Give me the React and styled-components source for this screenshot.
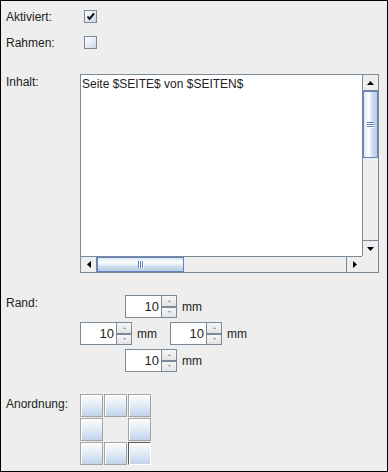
import styled, { createGlobalStyle } from 'styled-components';

const GlobalStyle = createGlobalStyle`
  html, body {
    margin: 0;
    padding: 0;
    background: #eeeeee;
  }
  * {
    box-sizing: border-box;
  }
`;

const Frame = styled.div`
  width: 388px;
  height: 472px;
  border: 1px solid #000;
  background: #eeeeee;
  padding: 9px 0 0 5px;
  display: flex;
  flex-direction: column;
  font-family: 'Liberation Sans', Arial, sans-serif;
  font-size: 12px;
  color: #222;
`;

const Row = styled.div`
  display: flex;
  align-items: flex-start;
  margin-top: ${(p) => p.$gap || 0}px;
`;

const Label = styled.div`
  width: 74px;
  flex-shrink: 0;
  line-height: 14px;
  margin-top: ${(p) => p.$offset || 0}px;
`;

const CheckBox = styled.div`
  width: 13px;
  height: 13px;
  margin-left: 4px;
  border: 1px solid #7a8a99;
  background: linear-gradient(135deg, #ffffff 0%, #e6edf5 50%, #c8d6e6 100%);
  display: flex;
  align-items: center;
  justify-content: center;
`;

const ScrollPane = styled.div`
  width: 299px;
  height: 199px;
  border: 1px solid #7a8a99;
  display: grid;
  grid-template-columns: 1fr 16px;
  grid-template-rows: 1fr 16px;
`;

const TextArea = styled.div`
  background: #fff;
  padding: 2px 1px;
  line-height: 14px;
  white-space: nowrap;
`;

const VScroll = styled.div`
  display: flex;
  flex-direction: column;
  background: #eeeeee;
  border-left: 1px solid #7a8a99;
`;

const HScroll = styled.div`
  display: flex;
  background: #eeeeee;
  border-top: 1px solid #7a8a99;
`;

const Corner = styled.div`
  background: #eeeeee;
`;

const ArrowButton = styled.div`
  width: ${(p) => (p.$horizontal ? '16px' : '100%')};
  height: ${(p) => (p.$horizontal ? '100%' : '16px')};
  flex-shrink: 0;
  background: #eeeeee;
  display: flex;
  align-items: center;
  justify-content: center;
  border-color: #7a8a99;
  border-style: solid;
  border-width: ${(p) =>
    ({ up: '0 0 1px 0', down: '1px 0 0 0', left: '0 1px 0 0', right: '0 0 0 1px' }[p.$dir])};
`;

const Track = styled.div`
  flex: 1;
  display: flex;
  flex-direction: ${(p) => (p.$horizontal ? 'row' : 'column')};
`;

const Thumb = styled.div`
  flex-shrink: 0;
  width: ${(p) => (p.$horizontal ? `${p.$size}px` : '100%')};
  height: ${(p) => (p.$horizontal ? '100%' : `${p.$size}px`)};
  border: 1px solid #6382bf;
  background: linear-gradient(
    ${(p) => (p.$horizontal ? 'to bottom' : 'to right')},
    #dce7f3 0%,
    #ffffff 35%,
    #c9daec 70%,
    #b8cfe5 100%
  );
  display: flex;
  flex-direction: ${(p) => (p.$horizontal ? 'row' : 'column')};
  align-items: center;
  justify-content: center;
  gap: 1px;
`;

const Grip = styled.span`
  display: block;
  background: #6382bf;
  width: ${(p) => (p.$horizontal ? '1px' : '7px')};
  height: ${(p) => (p.$horizontal ? '7px' : '1px')};
  box-shadow: ${(p) => (p.$horizontal ? '1px 0 0 #fff' : '0 1px 0 #fff')};
`;

const MarginBox = styled.div`
  width: 167px;
  display: flex;
  flex-direction: column;
  align-items: center;
  gap: 4px;
`;

const MarginRow = styled.div`
  display: flex;
  gap: 13px;
`;

const SpinGroup = styled.div`
  display: flex;
  align-items: center;
  gap: 5px;
`;

const Spinner = styled.div`
  width: 52px;
  height: 23px;
  border: 1px solid #7a8a99;
  display: flex;
  background: #fff;
`;

const SpinField = styled.div`
  flex: 1;
  text-align: right;
  padding-right: 2px;
  line-height: 22px;
  font-size: 13px;
`;

const SpinButtons = styled.div`
  width: 15px;
  display: flex;
  flex-direction: column;
  border-left: 1px solid #7a8a99;
`;

const SpinButton = styled.div`
  flex: 1;
  background: linear-gradient(to bottom, #f6f6f6, #e4e4e4);
  display: flex;
  align-items: center;
  justify-content: center;
  border-color: #7a8a99;
  border-style: solid;
  border-width: ${(p) => (p.$up ? '0 0 1px 0' : '1px 0 0 0')};
`;

const Unit = styled.span`
  font-size: 12px;
  line-height: 14px;
`;

const PosGrid = styled.div`
  display: grid;
  grid-template-columns: repeat(3, 23px);
  grid-template-rows: repeat(3, 23px);
  gap: 1px;
`;

const PosButton = styled.div`
  border: 1px solid #a3a3a3;
  border-top-color: ${(p) => (p.$selected ? '#5a5a5a' : '#a3a3a3')};
  border-left-color: ${(p) => (p.$selected ? '#5a5a5a' : '#a3a3a3')};
  border-right-color: ${(p) => (p.$selected ? '#ffffff' : '#a3a3a3')};
  border-bottom-color: ${(p) => (p.$selected ? '#ffffff' : '#a3a3a3')};
  box-shadow: inset 1px 1px 0 #ffffff;
  background: linear-gradient(to bottom, #fbfcfe 0%, #e4ecf6 45%, #c3d5eb 100%);
`;

const Empty = styled.div``;

const Triangle = ({ dir, size = 7, color = '#000' }) => {
  const h = Math.ceil(size / 2);
  const pts = {
    up: `0,${h} ${size},${h} ${size / 2},0`,
    down: `0,0 ${size},0 ${size / 2},${h}`,
    left: `${h},0 ${h},${size} 0,${size / 2}`,
    right: `0,0 0,${size} ${h},${size / 2}`,
  }[dir];
  const horiz = dir === 'left' || dir === 'right';
  return (
    <svg width={horiz ? h : size} height={horiz ? size : h} style={{ display: 'block' }}>
      <polygon points={pts} fill={color} />
    </svg>
  );
};

const CheckMark = () => (
  <svg width="9" height="9" viewBox="0 0 9 9" style={{ display: 'block' }}>
    <path d="M1.5 4.5 L3.5 7 L8 1.5" fill="none" stroke="#111" strokeWidth="2" />
  </svg>
);

const Spin = ({ value }) => (
  <SpinGroup>
    <Spinner>
      <SpinField>{value}</SpinField>
      <SpinButtons>
        <SpinButton $up>
          <Triangle dir="up" size={3} color="#8a9aaa" />
        </SpinButton>
        <SpinButton>
          <Triangle dir="down" size={3} color="#8a9aaa" />
        </SpinButton>
      </SpinButtons>
    </Spinner>
    <Unit>mm</Unit>
  </SpinGroup>
);

const positions = [true, true, true, true, false, true, true, true, 'sel'];

export default function App() {
  return (
    <>
      <GlobalStyle />
      <Frame>
        <Row>
          <Label>Aktiviert:</Label>
          <CheckBox>
            <CheckMark />
          </CheckBox>
        </Row>
        <Row $gap={12}>
          <Label>Rahmen:</Label>
          <CheckBox />
        </Row>
        <Row $gap={24}>
          <Label $offset={1}>Inhalt:</Label>
          <ScrollPane>
            <TextArea>Seite $SEITE$ von $SEITEN$</TextArea>
            <VScroll>
              <ArrowButton $dir="up">
                <Triangle dir="up" />
              </ArrowButton>
              <Track>
                <Thumb $size={67}>
                  <Grip />
                  <Grip />
                  <Grip />
                </Thumb>
              </Track>
              <ArrowButton $dir="down">
                <Triangle dir="down" />
              </ArrowButton>
            </VScroll>
            <HScroll>
              <ArrowButton $horizontal $dir="left">
                <Triangle dir="left" />
              </ArrowButton>
              <Track $horizontal>
                <Thumb $horizontal $size={87}>
                  <Grip $horizontal />
                  <Grip $horizontal />
                  <Grip $horizontal />
                </Thumb>
              </Track>
              <ArrowButton $horizontal $dir="right">
                <Triangle dir="right" />
              </ArrowButton>
            </HScroll>
            <Corner />
          </ScrollPane>
        </Row>
        <Row $gap={22}>
          <Label $offset={1}>Rand:</Label>
          <MarginBox>
            <Spin value="10" />
            <MarginRow>
              <Spin value="10" />
              <Spin value="10" />
            </MarginRow>
            <Spin value="10" />
          </MarginBox>
        </Row>
        <Row $gap={22}>
          <Label $offset={3}>Anordnung:</Label>
          <PosGrid>
            {positions.map((p, i) =>
              p ? <PosButton key={i} $selected={p === 'sel'} /> : <Empty key={i} />
            )}
          </PosGrid>
        </Row>
      </Frame>
    </>
  );
}
